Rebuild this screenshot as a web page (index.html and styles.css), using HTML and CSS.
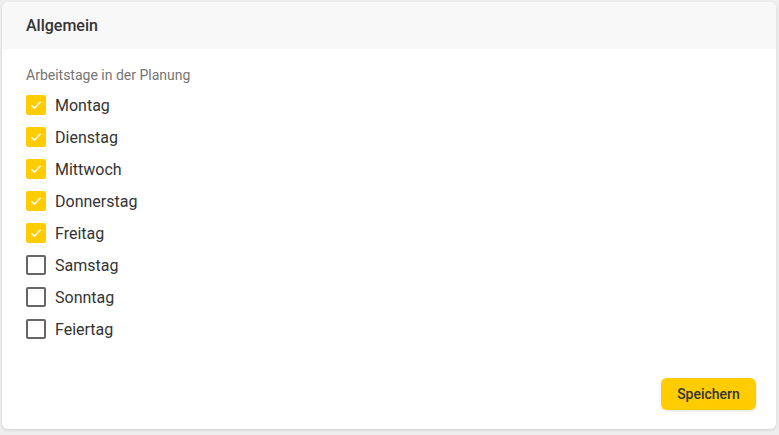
FILE: index.html
```html
<!DOCTYPE html>
<html lang="de">
<head>
<meta charset="utf-8">
<link rel="stylesheet" href="styles.css">
</head>
<body>
<div class="card">
  <div class="card-header">Allgemein</div>
  <div class="card-body">
    <div class="label">Arbeitstage in der Planung</div>
    <ul class="days">
      <li class="day"><span class="box checked"><svg viewBox="0 0 20 20"><path d="M5.5 10.2l3 3 6-6.4"/></svg></span>Montag</li>
      <li class="day"><span class="box checked"><svg viewBox="0 0 20 20"><path d="M5.5 10.2l3 3 6-6.4"/></svg></span>Dienstag</li>
      <li class="day"><span class="box checked"><svg viewBox="0 0 20 20"><path d="M5.5 10.2l3 3 6-6.4"/></svg></span>Mittwoch</li>
      <li class="day"><span class="box checked"><svg viewBox="0 0 20 20"><path d="M5.5 10.2l3 3 6-6.4"/></svg></span>Donnerstag</li>
      <li class="day"><span class="box checked"><svg viewBox="0 0 20 20"><path d="M5.5 10.2l3 3 6-6.4"/></svg></span>Freitag</li>
      <li class="day"><span class="box"></span>Samstag</li>
      <li class="day"><span class="box"></span>Sonntag</li>
      <li class="day"><span class="box"></span>Feiertag</li>
    </ul>
    <div class="actions">
      <button class="btn">Speichern</button>
    </div>
  </div>
</div>
</body>
</html>
```
FILE: styles.css
```css
html, body {
  margin: 0;
  padding: 0;
  background: #eeeeee;
  font-family: Roboto, "Liberation Sans", sans-serif;
}
body {
  padding: 2px 3px 6px 2px;
  height: 435px;
  box-sizing: border-box;
}
.card {
  background: #fff;
  border-radius: 6px;
  box-shadow: 0 1px 3px rgba(0,0,0,0.12);
  height: 427px;
  display: flex;
  flex-direction: column;
  overflow: hidden;
}
.card-header {
  background: #f8f8f8;
  height: 47px;
  box-sizing: border-box;
  padding: 14px 24px 0;
  font-size: 16px;
  line-height: 19px;
  font-weight: 500;
  color: #333;
}
.card-body {
  flex: 1;
  display: flex;
  flex-direction: column;
  padding: 17px 20px 19px 24px;
}
.label {
  font-size: 14px;
  color: #757575;
  line-height: 18px;
}
.days {
  list-style: none;
  margin: 5px 0 0;
  padding: 0;
}
.day {
  display: flex;
  align-items: center;
  height: 32px;
  font-size: 16px;
  color: #333;
}
.box {
  width: 20px;
  height: 20px;
  box-sizing: border-box;
  border: 2px solid #666;
  border-radius: 2px;
  margin: 0 9px 0 0;
  display: inline-flex;
  flex: none;
}
.box.checked {
  background: #ffcc00;
  border: none;
}
.box svg {
  width: 20px;
  height: 20px;
  fill: none;
  stroke: #fff;
  stroke-width: 1.6;
}
.actions {
  margin-top: auto;
  display: flex;
  justify-content: flex-end;
}
.btn {
  background: #ffcc00;
  border: none;
  border-radius: 6px;
  height: 32px;
  width: 95px;
  font-family: Roboto, "Liberation Sans", sans-serif;
  font-size: 14px;
  font-weight: 500;
  color: #333;
  box-shadow: 0 1px 3px rgba(0,0,0,0.12);
}
```
